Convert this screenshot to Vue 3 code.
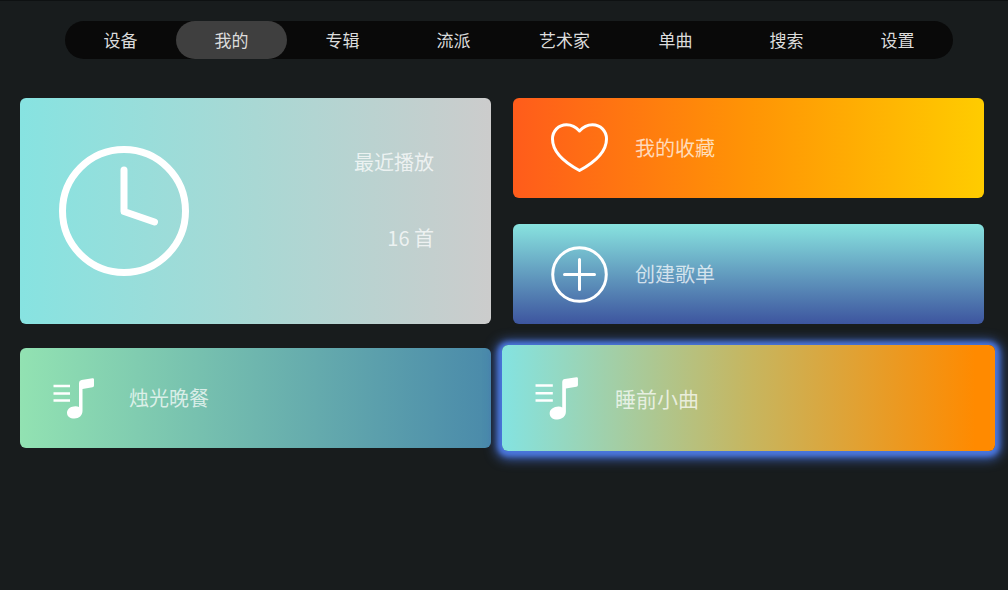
<script setup>
import { ref } from 'vue'

const tabs = ['设备', '我的', '专辑', '流派', '艺术家', '单曲', '搜索', '设置']
const current = ref('我的')
</script>

<template>
  <div class="screen">
    <nav class="tabs" aria-label="主导航">
      <button
        v-for="tab in tabs"
        :key="tab"
        type="button"
        class="tab"
        :class="{ active: tab === current }"
        @click="current = tab"
      >{{ tab }}</button>
    </nav>

    <main class="board">
      <div class="column">
        <button type="button" class="card recent">
          <svg class="clock" viewBox="0 0 130 130" aria-hidden="true">
            <circle cx="65" cy="65" r="61.5" />
            <path d="M65 24V65.500L95.500 76" />
          </svg>
          <span class="recent-text">
            <span>最近播放</span>
            <span>16 首</span>
          </span>
        </button>
        <button type="button" class="card playlist dinner">
          <svg class="note" viewBox="0 0 42 41" aria-hidden="true">
            <path class="lines" d="M0.500 8H17M0.500 15.500H17M0.500 22.500H17" />
            <path d="M26 5Q26 2.300 28.500 2L39.500 .2Q41 0 41 1.500V7.500Q41 9 39.500 9.300L29.500 11V33C29.500 37.500 26 40.500 21.500 40.500C17 40.500 14 38.300 14 34.700C14 31 17.800 28.200 22.500 28.200Q24.800 28.200 26 29Z" />
          </svg>
          <span>烛光晚餐</span>
        </button>
      </div>

      <div class="column">
        <button type="button" class="card action favorites">
          <svg class="glyph" viewBox="0 0 57 57" aria-hidden="true">
            <path d="M28.500 11C25 7 20.500 4.700 15.500 4.700C7.500 4.700 1.500 11 1.500 19C1.500 33.500 15.500 43.500 28.500 50.500C41.500 43.500 55.500 33.500 55.500 19C55.500 11 49.500 4.700 41.500 4.700C36.500 4.700 32 7 28.500 11Z" />
          </svg>
          <span>我的收藏</span>
        </button>
        <button type="button" class="card action create">
          <svg class="glyph" viewBox="0 0 57 57" aria-hidden="true">
            <circle cx="28.500" cy="28.500" r="26.800" />
            <path d="M28.500 13.500V43.500M13.500 28.500H43.500" />
          </svg>
          <span>创建歌单</span>
        </button>
        <button type="button" class="card playlist bedtime focused">
          <svg class="note" viewBox="0 0 42 41" aria-hidden="true">
            <path class="lines" d="M0.500 8H17M0.500 15.500H17M0.500 22.500H17" />
            <path d="M26 5Q26 2.300 28.500 2L39.500 .2Q41 0 41 1.500V7.500Q41 9 39.500 9.300L29.500 11V33C29.500 37.500 26 40.500 21.500 40.500C17 40.500 14 38.300 14 34.700C14 31 17.800 28.200 22.500 28.200Q24.800 28.200 26 29Z" />
          </svg>
          <span>睡前小曲</span>
        </button>
      </div>
    </main>
  </div>
</template>

<style>
body {
  margin: 0;
  background: #181c1d;
}
</style>

<style scoped>
.screen {
  min-height: 100vh;
  box-sizing: border-box;
  padding: 20px 24px 24px 20px;
  background: #181c1d;
  border-top: 1px solid #0e1112;
  font-family: "Noto Sans CJK SC", sans-serif;
}

button {
  margin: 0;
  padding: 0;
  border: 0;
  font-family: inherit;
  cursor: pointer;
}

.tabs {
  display: flex;
  margin: 0 31px 0 45px;
  border-radius: 20px;
  background: #090909;
}

.tab {
  flex: 1;
  height: 38px;
  border-radius: 20px;
  background: transparent;
  color: #dcdcdc;
  font-size: 17px;
  line-height: 24px;
}

.tab.active {
  background: #3f3f3f;
}

.board {
  display: grid;
  grid-template-columns: 1fr 1fr;
  gap: 22px;
  margin-top: 39px;
}

.column {
  display: flex;
  flex-direction: column;
  gap: 24px;
}

.card {
  display: flex;
  align-items: center;
  box-sizing: border-box;
  min-height: 100px;
  border-radius: 6px;
  color: rgba(255, 255, 255, 0.72);
  font-size: 20px;
  font-weight: 400;
  line-height: 28px;
  text-align: left;
}

.recent {
  justify-content: space-between;
  min-height: 226px;
  padding: 0 57px 0 39px;
  background: linear-gradient(90deg, #87e3e1, #a9d8d4 50%, #cccccc);
}

.clock {
  width: 130px;
  height: 130px;
  fill: none;
  stroke: #fff;
  stroke-width: 7;
  stroke-linecap: round;
  stroke-linejoin: round;
}

.recent-text {
  display: flex;
  flex-direction: column;
  align-items: flex-end;
  gap: 48px;
  margin-bottom: 22px;
}

.action {
  gap: 27px;
  padding: 0 38px;
}

.glyph {
  width: 57px;
  height: 57px;
  fill: none;
  stroke: #fff;
  stroke-width: 3;
  stroke-linecap: round;
  stroke-linejoin: round;
}

.favorites {
  background: linear-gradient(90deg, #ff5c1b, #ff9405 50%, #ffcc00);
}

.create {
  margin-top: 2px;
  background: linear-gradient(180deg, #88e3df, #3d559f);
}

.playlist {
  gap: 34px;
  padding: 0 33px;
}

.note {
  width: 42px;
  height: 41px;
  fill: #fff;
}

.lines {
  fill: none;
  stroke: #fff;
  stroke-width: 2.4;
}

.dinner {
  background: linear-gradient(90deg, #92e2b2, #4a8aaa);
}

.bedtime {
  background: linear-gradient(90deg, #84e3e1, #c6b660 50%, #ff8a00 96%);
}

.focused {
  min-height: 106px;
  margin: -3px -11px;
  gap: 36px;
  font-size: 21px;
  box-shadow: 0 1px 5px 4px #4a76dc, 0 2px 12px 6px #3f63b8;
}

.focused .note {
  width: 44px;
  height: 43px;
}
</style>
